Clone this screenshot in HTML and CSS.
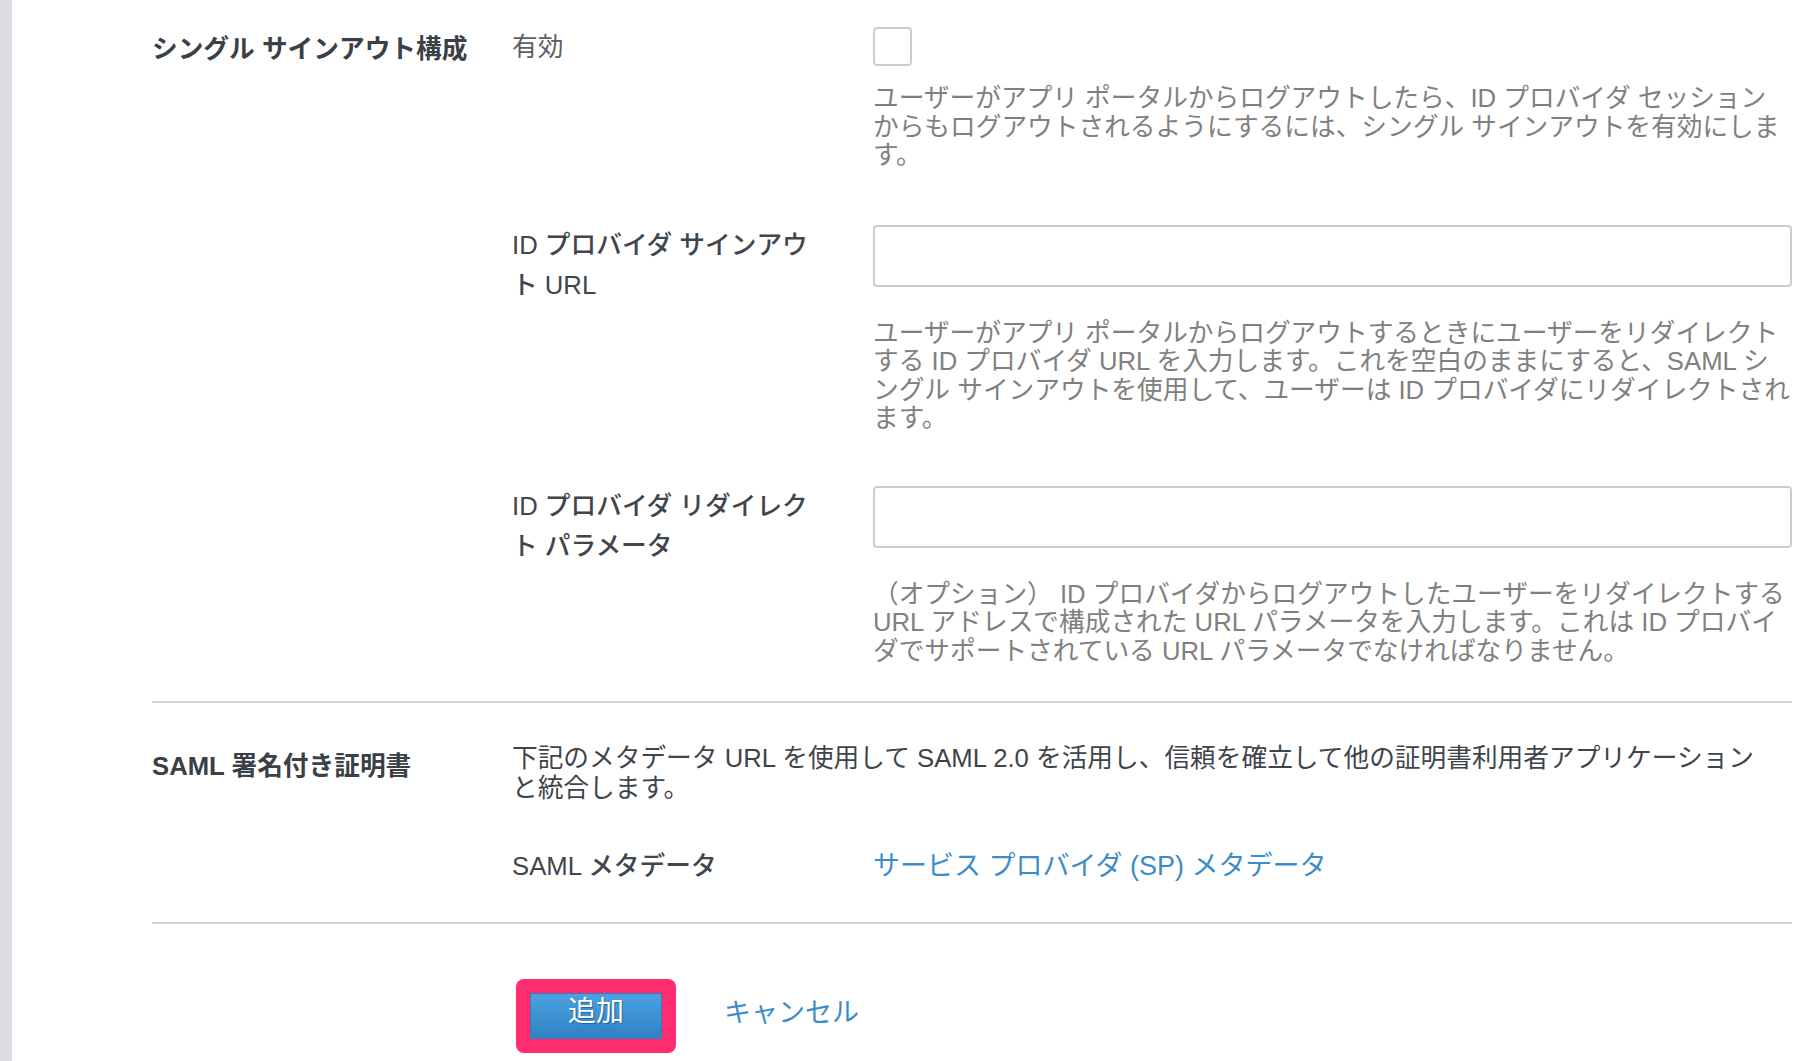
FILE: index.html
```html
<!DOCTYPE html>
<html lang="ja">
  <head>
    <meta charset="utf-8" />
    <meta name="viewport" content="width=device-width, initial-scale=1" />
    <title>SAML 設定</title>
    <link rel="stylesheet" href="styles.css">
  </head>
  <body>
    <div class="page">
      <section class="section signout">
        <h2 class="section-title">シングル サインアウト構成</h2>
        <div class="fields">
          <div class="field">
            <label class="field-label plain" for="slo-enabled">有効</label>
            <div class="control">
              <input type="checkbox" id="slo-enabled" class="check" />
              <p class="help help-check">ユーザーがアプリ ポータルからログアウトしたら、ID プロバイダ セッションからもログアウトされるようにするには、シングル サインアウトを有効にします。</p>
            </div>
          </div>
          <div class="field">
            <label class="field-label" for="slo-url">ID プロバイダ サインアウト URL</label>
            <div class="control">
              <input type="text" id="slo-url" class="text-input" />
              <p class="help">ユーザーがアプリ ポータルからログアウトするときにユーザーをリダイレクトする ID プロバイダ URL を入力します。これを空白のままにすると、SAML シングル サインアウトを使用して、ユーザーは ID プロバイダにリダイレクトされます。</p>
            </div>
          </div>
          <div class="field">
            <label class="field-label" for="slo-param">ID プロバイダ リダイレクト パラメータ</label>
            <div class="control">
              <input type="text" id="slo-param" class="text-input" />
              <p class="help">（オプション） ID プロバイダからログアウトしたユーザーをリダイレクトする URL アドレスで構成された URL パラメータを入力します。これは ID プロバイダでサポートされている URL パラメータでなければなりません。</p>
            </div>
          </div>
        </div>
      </section>

      <section class="section cert">
        <h2 class="section-title">SAML 署名付き証明書</h2>
        <div class="fields">
          <p class="intro">下記のメタデータ URL を使用して SAML 2.0 を活用し、信頼を確立して他の証明書利用者アプリケーションと統合します。</p>
          <div class="field meta">
            <span class="field-label">SAML メタデータ</span>
            <a class="link meta-link" href="#">サービス プロバイダ (SP) メタデータ</a>
          </div>
        </div>
      </section>

      <div class="actions">
        <span class="highlight">
          <button class="btn-primary" type="button">追加</button>
        </span>
        <a class="link cancel" href="#">キャンセル</a>
      </div>
    </div>
  </body>
</html>
```

FILE: styles.css
```css
html, body {
  margin: 0;
  background: #fff;
}

body {
  font-family: "Liberation Sans", "Noto Sans CJK JP", sans-serif;
  font-size: 25.7px;
  color: #3f444a;
}

.page {
  min-height: 100vh;
  box-sizing: border-box;
  border-left: 12px solid #dcdde0;
  padding: 0 18px 0 140px;
}

.section {
  display: grid;
  grid-template-columns: 360px 1fr;
  border-bottom: 2px solid #d3d3d3;
}

.signout {
  padding: 26px 0 34px;
}

.cert {
  padding: 40px 0 35px;
}

.section-title {
  margin: 0;
  padding-top: 3px;
  font-size: 25.7px;
  font-weight: 700;
  line-height: 40px;
  color: #3b4047;
}

.fields {
  display: flex;
  flex-direction: column;
  gap: 51px;
}

.field {
  display: grid;
  grid-template-columns: 361px 1fr;
}

.field-label {
  padding-right: 45px;
  font-weight: 500;
  line-height: 40px;
  color: #41464c;
}

.field-label.plain {
  padding-top: 1px;
  font-weight: 400;
  color: #5b5f64;
}

.check {
  -webkit-appearance: none;
  appearance: none;
  display: block;
  width: 39px;
  height: 39px;
  margin: 1px 0 0;
  box-sizing: border-box;
  border: 2px solid #cdcdcd;
  border-radius: 4px;
  background: #fff;
}

.text-input {
  display: block;
  width: 100%;
  height: 62px;
  margin: 0;
  box-sizing: border-box;
  border: 2px solid #cdcdcd;
  border-radius: 4px;
  background: #fff;
  font: inherit;
}

.help {
  max-width: 917px;
  margin: 32px 0 2px;
  line-height: 28.5px;
  color: #808080;
}

.help-check {
  margin: 18px 0 4px;
}

.intro {
  max-width: 1262px;
  margin: 0;
  line-height: 30px;
  color: #3f444a;
}

.meta {
  margin-top: -10px;
  align-items: center;
}

.link {
  color: #3b8cc8;
  text-decoration: none;
}

.meta-link {
  font-size: 27px;
  padding-bottom: 4px;
}

.actions {
  display: flex;
  align-items: center;
  padding: 55px 0 0 364px;
}

.highlight {
  display: inline-block;
  padding: 14px;
  border-radius: 8px;
  background: #ff2d6f;
}

.btn-primary {
  display: block;
  width: 132px;
  height: 46px;
  padding: 0 0 10px;
  border: 1px solid #2f7dba;
  background: linear-gradient(#4ba1e1, #2f83c4);
  color: #fff;
  font-family: inherit;
  font-size: 28px;
  line-height: 29px;
  text-shadow: 1px 1px 1px rgba(0, 0, 0, 0.35);
}

.cancel {
  margin: 0 0 11px 48px;
  font-size: 27px;
}
```
